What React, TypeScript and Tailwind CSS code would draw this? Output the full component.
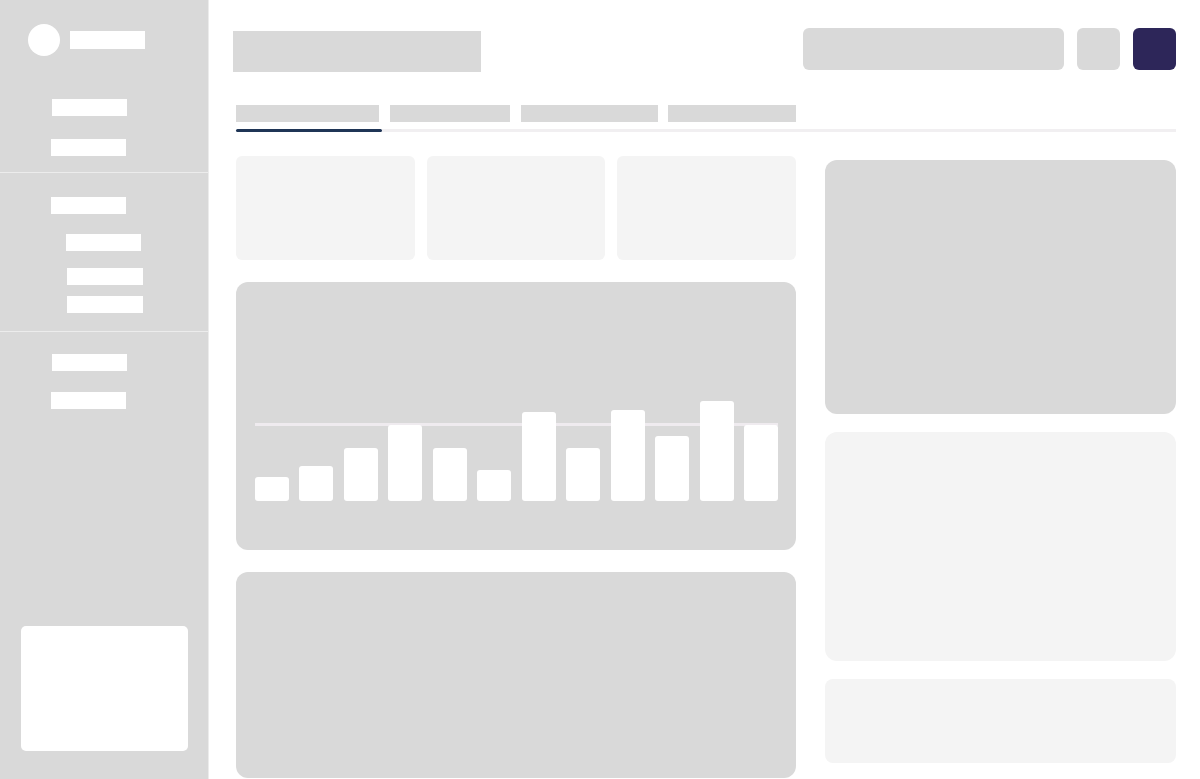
import React from "react";

const bars = [24, 35, 53, 76, 53, 31, 89, 53, 91, 65, 100, 76];

export default function App() {
  return (
    <div className="flex w-full h-[779px] overflow-hidden bg-white" style={{ fontFamily: "Inter, 'Liberation Sans', sans-serif" }}>
      {/* Sidebar */}
      <aside className="w-[209px] shrink-0 h-full flex flex-col bg-[#d9d9d9] border-r border-[#ececec]">
        <div className="h-[173px] border-b border-[#ececec] pt-[24px]">
          <div className="flex items-center ml-[28px] h-[32px]">
            <div className="w-[32px] h-[32px] rounded-full bg-white" />
            <div className="ml-[10px] w-[75px] h-[18px] bg-white" />
          </div>
          <div className="mt-[43px] ml-[52px] w-[75px] h-[17px] bg-white" />
          <div className="mt-[23px] ml-[51px] w-[75px] h-[17px] bg-white" />
        </div>
        <div className="h-[159px] border-b border-[#ececec] pt-[24px]">
          <div className="ml-[51px] w-[75px] h-[17px] bg-white" />
          <div className="mt-[20px] ml-[66px] w-[75px] h-[17px] bg-white" />
          <div className="mt-[17px] ml-[67px] w-[76px] h-[17px] bg-white" />
          <div className="mt-[11px] ml-[67px] w-[76px] h-[17px] bg-white" />
        </div>
        <div className="pt-[22px]">
          <div className="ml-[52px] w-[75px] h-[17px] bg-white" />
          <div className="mt-[21px] ml-[51px] w-[75px] h-[17px] bg-white" />
        </div>
        <div className="mt-auto mb-[28px] ml-[21px] w-[167px] h-[125px] rounded-[5px] bg-white" />
      </aside>

      {/* Main */}
      <main className="flex-1 min-w-0 pl-[24px] pr-[24px] pt-[28px]">
        <div className="flex justify-between h-[44px]">
          <div className="mt-[3px] w-[248px] h-[41px] bg-[#d9d9d9]" />
          <div className="flex gap-[13px]">
            <div className="w-[261px] h-[42px] rounded-[6px] bg-[#d9d9d9]" />
            <div className="w-[43px] h-[42px] rounded-[6px] bg-[#d9d9d9]" />
            <div className="w-[43px] h-[42px] rounded-[6px] bg-[#2d2659]" />
          </div>
        </div>

        <div className="ml-[3px] mt-[33px]">
          <div className="flex">
            <div className="w-[143px] h-[17px] bg-[#d9d9d9]" />
            <div className="ml-[11px] w-[120px] h-[17px] bg-[#d9d9d9]" />
            <div className="ml-[11px] w-[137px] h-[17px] bg-[#d9d9d9]" />
            <div className="ml-[10px] w-[128px] h-[17px] bg-[#d9d9d9]" />
          </div>
          <div className="mt-[7px] flex items-center h-[3px]">
            <div className="w-[146px] h-[3px] rounded-full bg-[#1f3556]" />
            <div className="flex-1 h-[3px] bg-[#f1eff1]" />
          </div>
        </div>

        <div className="ml-[3px] mt-[24px] flex gap-[29px]">
          <div className="w-[560px] shrink-0">
            <div className="grid grid-cols-3 gap-[12px]">
              <div className="h-[104px] rounded-[6px] bg-[#f4f4f4]" />
              <div className="h-[104px] rounded-[6px] bg-[#f4f4f4]" />
              <div className="h-[104px] rounded-[6px] bg-[#f4f4f4]" />
            </div>
            <div className="mt-[22px] h-[268px] rounded-[12px] bg-[#d9d9d9] flex flex-col justify-end pl-[19px] pr-[18px] pb-[49px]">
              <div className="relative h-[101px] flex items-end gap-[10.45px]">
                <div className="absolute left-0 right-0 top-[23px] h-[3px] bg-[#efebef]" />
                {bars.map((h, i) => (
                  <div key={i} className="relative flex-1 rounded-[3px] bg-white" style={{ height: h }} />
                ))}
              </div>
            </div>
            <div className="mt-[22px] h-[206px] rounded-[12px] bg-[#d9d9d9]" />
          </div>

          <div className="flex-1 min-w-0 pt-[4px]">
            <div className="h-[254px] rounded-[12px] bg-[#d9d9d9]" />
            <div className="mt-[18px] h-[229px] rounded-[12px] bg-[#f4f4f4]" />
            <div className="mt-[18px] h-[84px] rounded-[8px] bg-[#f4f4f4]" />
          </div>
        </div>
      </main>
    </div>
  );
}
